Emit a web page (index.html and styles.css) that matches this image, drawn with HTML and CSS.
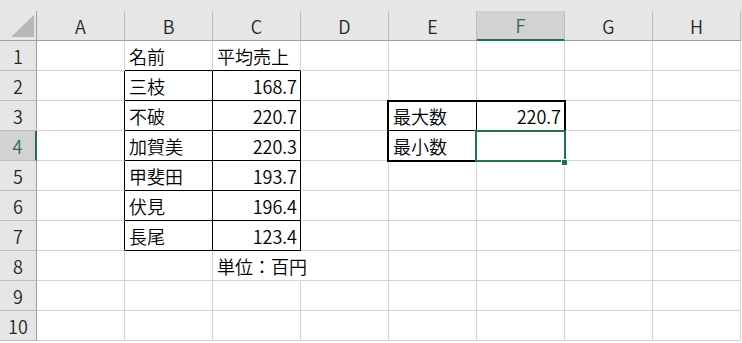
FILE: index.html
```html
<!DOCTYPE html>
<html lang="ja">
<head>
    <meta charset="UTF-8">
    <title>Sheet1</title>
    <link rel="stylesheet" href="styles.css">
</head>
<body>
<div class="sheet">
    <div class="ch corner"><span><svg width="23" height="22" viewBox="0 0 23 22"><polygon points="23,0 23,22 0,22" fill="#b7b7b7"/></svg></span></div>
    <div class="ch"><span>A</span></div>
    <div class="ch"><span>B</span></div>
    <div class="ch"><span>C</span></div>
    <div class="ch"><span>D</span></div>
    <div class="ch"><span>E</span></div>
    <div class="ch active"><span>F</span></div>
    <div class="ch"><span>G</span></div>
    <div class="ch"><span>H</span></div>

    <div class="rh">1</div>
    <div class="c"></div><div class="c bb">名前</div><div class="c bb">平均売上</div><div class="c"></div>
    <div class="c"></div><div class="c"></div><div class="c"></div><div class="c"></div>

    <div class="rh">2</div>
    <div class="c br"></div><div class="c br bb">三枝</div><div class="c br bb num">168.7</div><div class="c"></div>
    <div class="c bb"></div><div class="c bb"></div><div class="c"></div><div class="c"></div>

    <div class="rh">3</div>
    <div class="c br"></div><div class="c br bb">不破</div><div class="c br bb num">220.7</div><div class="c br"></div>
    <div class="c br bb">最大数</div><div class="c bb num">220.7</div><div class="c"></div><div class="c"></div>

    <div class="rh active">4</div>
    <div class="c br"></div><div class="c br bb">加賀美</div><div class="c br bb num">220.3</div><div class="c br"></div>
    <div class="c br">最小数</div><div class="c"></div><div class="c"></div><div class="c"></div>

    <div class="rh">5</div>
    <div class="c br"></div><div class="c br bb">甲斐田</div><div class="c br bb num">193.7</div><div class="c"></div>
    <div class="c"></div><div class="c"></div><div class="c"></div><div class="c"></div>

    <div class="rh">6</div>
    <div class="c br"></div><div class="c br bb">伏見</div><div class="c br bb num">196.4</div><div class="c"></div>
    <div class="c"></div><div class="c"></div><div class="c"></div><div class="c"></div>

    <div class="rh">7</div>
    <div class="c br"></div><div class="c br bb">長尾</div><div class="c br bb num">123.4</div><div class="c"></div>
    <div class="c"></div><div class="c"></div><div class="c"></div><div class="c"></div>

    <div class="rh">8</div>
    <div class="c"></div><div class="c"></div><div class="c spill">単位：百円</div><div class="c"></div>
    <div class="c"></div><div class="c"></div><div class="c"></div><div class="c"></div>

    <div class="rh">9</div>
    <div class="c"></div><div class="c"></div><div class="c"></div><div class="c"></div>
    <div class="c"></div><div class="c"></div><div class="c"></div><div class="c"></div>

    <div class="rh">10</div>
    <div class="c"></div><div class="c"></div><div class="c"></div><div class="c"></div>
    <div class="c"></div><div class="c"></div><div class="c"></div><div class="c"></div>

    <div class="range"></div>
    <div class="sel"></div>
</div>
</body>
</html>
```

FILE: styles.css
```css
body{
    margin: 0;
    background: #fff;
    font-family: "Noto Sans CJK JP", "Noto Sans", sans-serif;
    font-weight: 350;
    color: #000;
}
.sheet{
    position: relative;
    width: 742px;
    height: 343px;
    display: grid;
    grid-template-columns: 37px repeat(8, 88px);
    grid-template-rows: 41px repeat(10, 30px);
    align-content: start;
    background: linear-gradient(#e6e6e6 0 41px, #fff 41px);
    font-size: 18px;
    line-height: 1;
}
.ch{
    padding-top: 11px;
    box-sizing: border-box;
}
.ch span{
    display: flex;
    align-items: center;
    justify-content: center;
    height: 100%;
    box-sizing: border-box;
    border-right: 1px solid #bcbcbc;
    border-bottom: 1px solid #9f9f9f;
    color: #262626;
}
.corner span{
    justify-content: flex-end;
    align-items: flex-end;
    padding: 0 2px 3px 0;
    border-right-color: #9f9f9f;
}
.corner svg{
    display: block;
}
.ch.active span{
    background: #d2d2d2;
    border-bottom: 2px solid #217346;
    color: #217346;
}
.rh{
    display: flex;
    align-items: center;
    justify-content: center;
    box-sizing: border-box;
    background: #e6e6e6;
    border-right: 1px solid #9f9f9f;
    border-bottom: 1px solid #bcbcbc;
    color: #262626;
}
.rh.active{
    background: #d2d2d2;
    border-right: 2px solid #217346;
    color: #217346;
}
.c{
    display: flex;
    align-items: center;
    box-sizing: border-box;
    padding: 0 3px 0 4px;
    white-space: nowrap;
    border-right: 1px solid #d4d4d4;
    border-bottom: 1px solid #d4d4d4;
}
.c.num{
    justify-content: flex-end;
}
.c.br{
    border-right-color: #000;
}
.c.bb{
    border-bottom-color: #000;
}
.c.spill{
    border-right-color: #fff;
}
.range, .sel{
    position: absolute;
    top: -1px;
    right: -1px;
    bottom: -1px;
    left: -2px;
    pointer-events: none;
}
.range{
    grid-column: 6 / 8;
    grid-row: 4 / 6;
    border: 2px solid #000;
}
.sel{
    grid-column: 7 / 8;
    grid-row: 5 / 6;
    border: 2px solid #217346;
}
.sel::after{
    content: "";
    position: absolute;
    right: -4px;
    bottom: -6px;
    width: 5px;
    height: 5px;
    background: #217346;
    border: 1px solid #fff;
}
```
